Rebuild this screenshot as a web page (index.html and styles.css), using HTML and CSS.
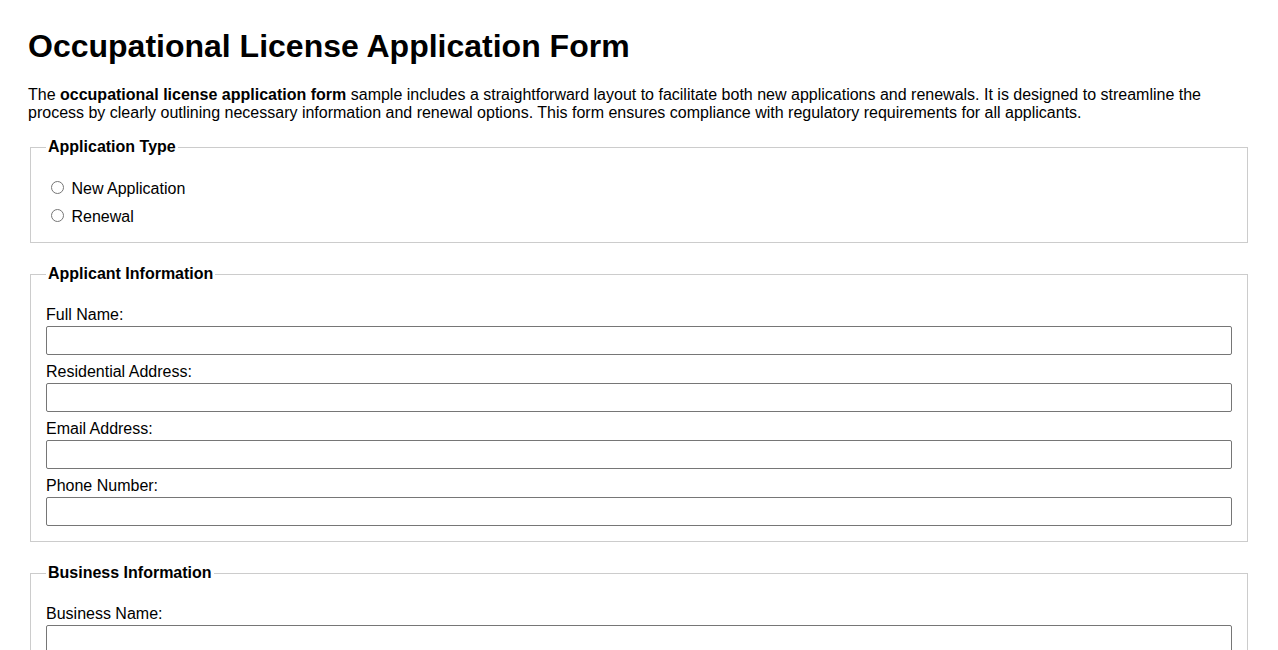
FILE: index.html
```html
<!DOCTYPE html>
<html lang="en">
<head>
<meta charset="utf-8">
<title>Occupational License Application Form</title>
<link rel="stylesheet" href="styles.css">
</head>
<body>
  <h1 class="title">Occupational License Application Form</h1>
  <p class="intro">The <strong>occupational license application form</strong> sample includes a straightforward layout to facilitate both new applications and renewals. It is designed to streamline the process by clearly outlining necessary information and renewal options. This form ensures compliance with regulatory requirements for all applicants.</p>

  <form class="license-form">
    <fieldset class="section section-choices">
      <legend class="section-title">Application Type</legend>
      <div class="choice-row">
        <input type="radio" id="type-new" name="application-type" value="new">
        <label for="type-new">New Application</label>
      </div>
      <div class="choice-row">
        <input type="radio" id="type-renewal" name="application-type" value="renewal">
        <label for="type-renewal">Renewal</label>
      </div>
    </fieldset>

    <fieldset class="section">
      <legend class="section-title">Applicant Information</legend>
      <label class="field-label" for="full-name">Full Name:</label>
      <input class="text-input" type="text" id="full-name" name="full-name">
      <label class="field-label" for="address">Residential Address:</label>
      <input class="text-input" type="text" id="address" name="address">
      <label class="field-label" for="email">Email Address:</label>
      <input class="text-input" type="email" id="email" name="email">
      <label class="field-label" for="phone">Phone Number:</label>
      <input class="text-input" type="tel" id="phone" name="phone">
    </fieldset>

    <fieldset class="section">
      <legend class="section-title">Business Information</legend>
      <label class="field-label" for="business-name">Business Name:</label>
      <input class="text-input" type="text" id="business-name" name="business-name">
      <label class="field-label" for="business-address">Business Address:</label>
      <input class="text-input" type="text" id="business-address" name="business-address">
    </fieldset>
  </form>
</body>
</html>
```

FILE: styles.css
```css
body {
  margin: 8px;
  padding: 20px;
  font-family: Arial, "Liberation Sans", sans-serif;
  font-size: 16px;
  color: #000;
  background: #fff;
}

.title {
  font-size: 32px;
  font-weight: bold;
  margin: 0 0 21px;
}

.intro {
  margin: 0 0 16px;
}

.license-form {
  margin: 0;
}

.section {
  margin: 0 2px 22px;
  padding: 23px 15px 15px;
  border: 1px solid #ccc;
}

.section-choices {
  padding-top: 22px;
  padding-bottom: 16px;
}

.section-title {
  font-weight: bold;
  padding: 0 2px;
}

.choice-row {
  margin-bottom: 8px;
}

.choice-row:last-child {
  margin-bottom: 0;
}

.choice-row input {
  margin: 3px 3px 0 5px;
}

.field-label {
  display: block;
  line-height: 18px;
  margin-bottom: 2px;
}

.text-input {
  display: block;
  box-sizing: border-box;
  width: 100%;
  height: 29px;
  margin: 0 0 8px;
  padding: 6px 8px;
  font-family: Arial, "Liberation Sans", sans-serif;
  font-size: 13.33px;
  border: 1px solid #767676;
  border-radius: 2px;
}

.text-input:last-child {
  margin-bottom: 0;
}
```
